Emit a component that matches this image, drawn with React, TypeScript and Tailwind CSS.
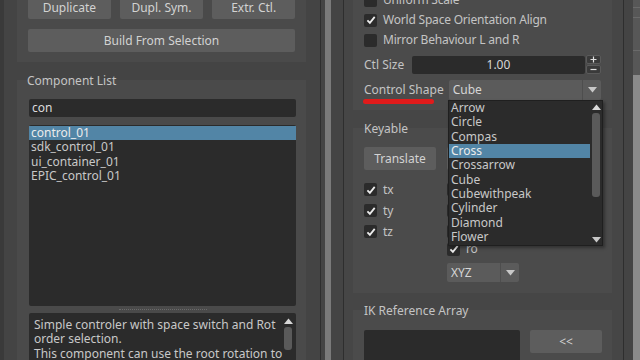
import React from 'react';

const shapes = ['Arrow', 'Circle', 'Compas', 'Cross', 'Crossarrow', 'Cube', 'Cubewithpeak', 'Cylinder', 'Diamond', 'Flower'];
const components = ['control_01', 'sdk_control_01', 'ui_container_01', 'EPIC_control_01'];

function Check({ on, label }: { on?: boolean; label?: string }) {
  return (
    <div className="flex items-center gap-[6px]">
      <div className="w-[13px] h-[13px] rounded-[2px] bg-[#2b2b2b] flex items-center justify-center shrink-0">
        {on && (
          <svg width="10" height="10" viewBox="0 0 10 10">
            <path d="M1.4 5.3 L3.9 7.8 L8.7 1.9" stroke="#ececec" strokeWidth="1.8" fill="none" />
          </svg>
        )}
      </div>
      {label && <span className="whitespace-nowrap tracking-[-0.2px]">{label}</span>}
    </div>
  );
}

function Btn({ label, className = '' }: { label: string; className?: string }) {
  return (
    <div className={`bg-[#5d5d5d] rounded-[2px] flex items-center justify-center text-[#d2d2d2] ${className}`}>
      {label}
    </div>
  );
}

function Down({ className = '' }: { className?: string }) {
  return (
    <svg width="9" height="6" viewBox="0 0 9 6" className={className}>
      <path d="M0 0 H9 L4.5 5.5 Z" fill="#c8c8c8" />
    </svg>
  );
}

function Up({ className = '' }: { className?: string }) {
  return (
    <svg width="9" height="6" viewBox="0 0 9 6" className={className}>
      <path d="M0 6 H9 L4.5 0.5 Z" fill="#d8d8d8" />
    </svg>
  );
}

export default function App() {
  return (
    <div className="relative w-[640px] h-[360px] overflow-hidden flex bg-[#444444] text-[#c4c4c4] text-[12px] leading-[14px] font-['Noto_Sans',sans-serif]">
      {/* left edge */}
      <div className="w-[4px] bg-[#3a3a3a]" />

      {/* left panel */}
      <div className="w-[316px] pl-[13px] pr-[14px] flex flex-col">
        <div className="-mt-[14px] bg-[#4a4a4a] pt-[10px] px-[11px] pb-[10px]">
          <div className="grid grid-cols-3 gap-[9.5px]">
            <Btn label="Duplicate" className="h-[23px]" />
            <Btn label="Dupl. Sym." className="h-[23px]" />
            <Btn label="Extr. Ctl." className="h-[23px]" />
          </div>
          <Btn label="Build From Selection" className="h-[23px] mt-[10px]" />
        </div>

        <div className="mt-[18px] flex-1 bg-[#4a4a4a] pl-[12px] pr-[10px] flex flex-col">
          <div className="-mt-[6px] h-[14px] -ml-[2px]">Component List</div>
          <div className="mt-[11px] h-[18px] bg-[#2b2b2b] rounded-[2px] pl-[3px] flex items-center text-[#dcdcdc]">con</div>
          <div className="mt-[8px] h-[181px] bg-[#2b2b2b] rounded-[2px] pt-[1px]">
            {components.map((c, i) => (
              <div
                key={c}
                className={`h-[14.3px] pl-[2px] flex items-center ${i === 0 ? 'bg-[#5285a6] text-[#ececec]' : 'text-[#c8c8c8]'}`}
              >
                {c}
              </div>
            ))}
          </div>
          <div className="h-[7px] flex items-center justify-center">
            <div className="w-[88px] border-t border-dotted border-[#6a6a6a]" />
          </div>
          <div className="flex-1 bg-[#2b2b2b] rounded-[2px] flex pl-[5px] pt-[5px] text-[#c8c8c8] overflow-hidden">
            <div className="flex-1 leading-[14.3px] whitespace-nowrap">
              Simple controler with space switch and Rot
              <br />
              order selection.
              <br />
              This component can use the root rotation to
            </div>
            <div className="w-[12px] mr-[2px] flex flex-col items-center">
              <Up />
              <div className="mt-[3px] w-[8px] h-[23px] rounded-[3px] bg-[#5a5a5a]" />
            </div>
          </div>
        </div>
      </div>

      {/* splitter */}
      <div className="w-[1px] bg-[#2e2e2e]" />
      <div className="w-[4px]" />
      <div className="w-[6px] bg-[#7a7a7a]" />
      <div className="w-[12px]" />
      <div className="w-[1px] bg-[#2e2e2e]" />

      {/* right panel */}
      <div className="w-[279px] bg-[#464646] pl-[9px] pr-[11px] flex flex-col">
        <div className="-mt-[20px] bg-[#4b4b4b] pl-[11px] pr-[11px] pt-[10px] pb-[10px]">
          <div className="h-[20px] flex items-center"><Check label="Uniform Scale" /></div>
          <div className="h-[20px] flex items-center"><Check on label="World Space Orientation Align" /></div>
          <div className="h-[20px] flex items-center"><Check label="Mirror Behaviour L and R" /></div>
          <div className="mt-[5px] h-[19px] flex items-center">
            <span className="w-[48px]">Ctl Size</span>
            <div className="w-[174px] h-[18px] bg-[#2b2b2b] rounded-[2px] flex items-center justify-center text-[#d6d6d6]">1.00</div>
            <div className="ml-[1px] w-[15px] h-[19px] flex flex-col gap-[1px]">
              <div className="h-[9px] bg-[#3a3a3a] border border-[#5a5a5a] rounded-[2px] flex items-center justify-center">
                <svg width="7" height="7" viewBox="0 0 7 7"><path d="M3.5 0.5 V6.5 M0.5 3.5 H6.5" stroke="#e0e0e0" strokeWidth="1.2" /></svg>
              </div>
              <div className="h-[9px] bg-[#3a3a3a] border border-[#5a5a5a] rounded-[2px] flex items-center justify-center">
                <svg width="7" height="7" viewBox="0 0 7 7"><path d="M0.5 3.5 H6.5" stroke="#e0e0e0" strokeWidth="1.2" /></svg>
              </div>
            </div>
          </div>
          <div className="mt-[6px] h-[20px] flex items-center">
            <span className="w-[85px] whitespace-nowrap">Control Shape</span>
            <div className="w-[153px] h-[20px] bg-[#5b5b5b] rounded-[2px] flex items-center">
              <span className="flex-1 pl-[4px] text-[#d6d6d6]">Cube</span>
              <div className="w-[19px] h-full border-l border-[#4e4e4e] flex items-center justify-center">
                <Down />
              </div>
            </div>
          </div>
        </div>

        <div className="mt-[18px] bg-[#4b4b4b] pl-[11px] pr-[10px] pb-[11px]">
          <div className="-mt-[6px] h-[14px]">Keyable</div>
          <div className="mt-[11px] flex">
            <div className="w-[83px] flex flex-col">
              <Btn label="Translate" className="w-[72px] h-[23px]" />
              <div className="mt-[9px] h-[21px] flex items-center"><Check on label="tx" /></div>
              <div className="h-[21px] flex items-center"><Check on label="ty" /></div>
              <div className="h-[21px] flex items-center"><Check on label="tz" /></div>
            </div>
            <div className="w-[83px] flex flex-col">
              <div className="w-[72px] h-[23px] bg-[#5d5d5d] rounded-[2px]" />
              <div className="mt-[9px] h-[21px] flex items-center"><Check on /></div>
              <div className="h-[21px] flex items-center"><Check on /></div>
              <div className="h-[21px] flex items-center"><Check on /></div>
              <div className="h-[14px] flex items-center"><Check on label="ro" /></div>
              <div className="mt-[7px] w-[72px] h-[19px] bg-[#5b5b5b] rounded-[2px] flex items-center">
                <span className="flex-1 pl-[4px] text-[#d6d6d6]">XYZ</span>
                <div className="w-[19px] h-full border-l border-[#4e4e4e] flex items-center justify-center">
                  <Down />
                </div>
              </div>
            </div>
          </div>
        </div>

        <div className="mt-[17px] flex-1 bg-[#4b4b4b] pl-[11px] pr-[10px]">
          <div className="-mt-[6px] h-[14px]">IK Reference Array</div>
          <div className="mt-[12px] flex gap-[10px]">
            <div className="w-[156px] h-[40px] bg-[#2b2b2b] rounded-[2px]" />
            <Btn label="<<" className="w-[72px] h-[23px]" />
          </div>
        </div>
      </div>

      {/* right strip */}
      <div className="w-[1px] bg-[#2e2e2e]" />
      <div className="w-[9px]" />
      <div className="w-[7px] flex flex-col">
        <div className="h-[75px] bg-[#575757] flex flex-col">
          <div className="h-[7px]" />
          <div className="h-[1px] bg-[#6a6a6a]" />
          <div className="h-[9px]" />
          <div className="h-[1px] bg-[#6a6a6a]" />
          <div className="h-[32px]" />
          <div className="h-[1px] bg-[#6a6a6a]" />
        </div>
        <div className="flex-1 bg-[#8a8a8a]" />
      </div>

      {/* red annotation underline */}
      <div className="absolute left-[363px] top-[99px] w-[71px] h-[5px] rounded-full bg-[#e11b1b]" />

      {/* open dropdown */}
      <div className="absolute left-[448px] top-[100px] w-[155px] h-[146px] bg-[#2b2b2b] border border-[#1f1f1f] shadow-[2px_2px_3px_rgba(0,0,0,0.35)] flex">
        <div className="flex-1 flex flex-col">
          {shapes.map((s) => (
            <div
              key={s}
              className={`h-[14.3px] pl-[2px] flex items-center ${s === 'Cross' ? 'bg-[#5285a6] text-[#ececec]' : 'text-[#c8c8c8]'}`}
            >
              {s}
            </div>
          ))}
        </div>
        <div className="w-[12px] flex flex-col items-center">
          <Up className="mt-[3px]" />
          <div className="mt-[3px] w-[8px] h-[84px] rounded-[3px] bg-[#5a5a5a]" />
          <div className="flex-1" />
          <Down className="mb-[2px]" />
        </div>
      </div>
    </div>
  );
}
